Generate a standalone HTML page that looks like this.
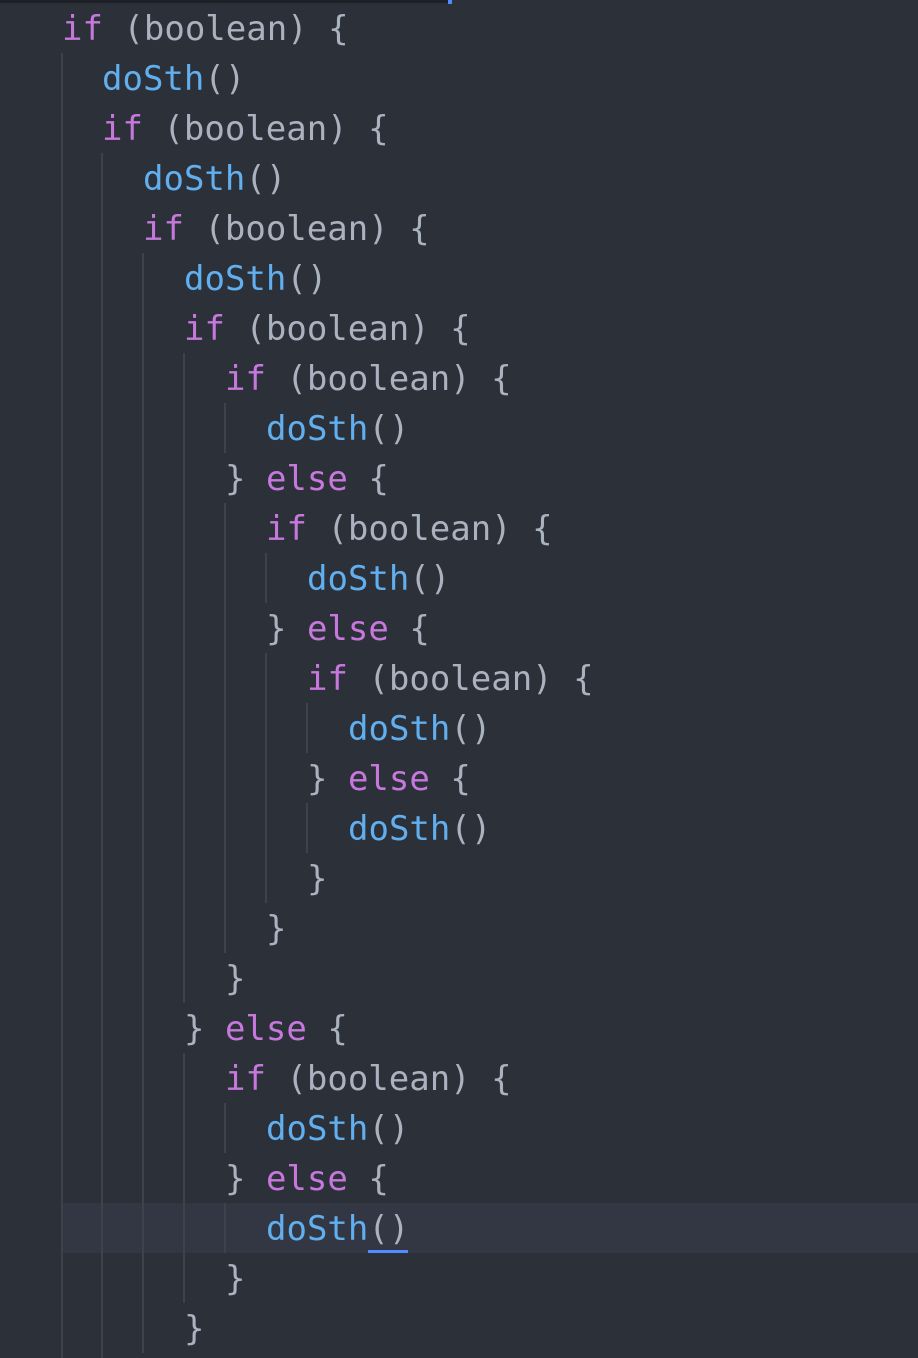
<!DOCTYPE html>
<html><head><meta charset="utf-8"><style>
html,body{margin:0;padding:0;background:#2c3039;width:918px;height:1358px;overflow:hidden;position:relative}
.top{position:absolute;left:0;top:0;width:450px;height:3px;background:#1d2026}
.cur{position:absolute;left:448px;top:0;width:4px;height:4px;background:#528bff}
.hl{position:absolute;left:62px;top:1203px;width:856px;height:50px;background:#323743}
.g{position:absolute;width:2px;background:#3d424b}
.l{position:absolute;height:50px;line-height:50px;font-family:"DejaVu Sans Mono","Liberation Mono",monospace;font-size:34px;color:#abb2bf;white-space:pre;margin-top:1px}
.k{color:#c678dd}.f{color:#61afef}
.u{position:absolute;left:368px;top:1250px;width:40px;height:3px;background:#528bff}
</style></head><body>
<div class="top"></div><div class="cur"></div>
<div class="hl"></div>
<div class="g" style="left:61px;top:53px;height:1305px"></div>
<div class="g" style="left:101px;top:153px;height:1205px"></div>
<div class="g" style="left:142px;top:253px;height:1100px"></div>
<div class="g" style="left:183px;top:353px;height:650px"></div>
<div class="g" style="left:183px;top:1053px;height:250px"></div>
<div class="g" style="left:224px;top:403px;height:50px"></div>
<div class="g" style="left:224px;top:503px;height:450px"></div>
<div class="g" style="left:224px;top:1103px;height:50px"></div>
<div class="g" style="left:224px;top:1203px;height:50px"></div>
<div class="g" style="left:265px;top:553px;height:50px"></div>
<div class="g" style="left:265px;top:653px;height:250px"></div>
<div class="g" style="left:306px;top:703px;height:50px"></div>
<div class="g" style="left:306px;top:803px;height:50px"></div>

<div class="l" style="left:62px;top:3px"><span class="k">if</span> (boolean) {</div>
<div class="l" style="left:102px;top:53px"><span class="f">doSth</span>()</div>
<div class="l" style="left:102px;top:103px"><span class="k">if</span> (boolean) {</div>
<div class="l" style="left:143px;top:153px"><span class="f">doSth</span>()</div>
<div class="l" style="left:143px;top:203px"><span class="k">if</span> (boolean) {</div>
<div class="l" style="left:184px;top:253px"><span class="f">doSth</span>()</div>
<div class="l" style="left:184px;top:303px"><span class="k">if</span> (boolean) {</div>
<div class="l" style="left:225px;top:353px"><span class="k">if</span> (boolean) {</div>
<div class="l" style="left:266px;top:403px"><span class="f">doSth</span>()</div>
<div class="l" style="left:225px;top:453px">} <span class="k">else</span> {</div>
<div class="l" style="left:266px;top:503px"><span class="k">if</span> (boolean) {</div>
<div class="l" style="left:307px;top:553px"><span class="f">doSth</span>()</div>
<div class="l" style="left:266px;top:603px">} <span class="k">else</span> {</div>
<div class="l" style="left:307px;top:653px"><span class="k">if</span> (boolean) {</div>
<div class="l" style="left:348px;top:703px"><span class="f">doSth</span>()</div>
<div class="l" style="left:307px;top:753px">} <span class="k">else</span> {</div>
<div class="l" style="left:348px;top:803px"><span class="f">doSth</span>()</div>
<div class="l" style="left:307px;top:853px">}</div>
<div class="l" style="left:266px;top:903px">}</div>
<div class="l" style="left:225px;top:953px">}</div>
<div class="l" style="left:184px;top:1003px">} <span class="k">else</span> {</div>
<div class="l" style="left:225px;top:1053px"><span class="k">if</span> (boolean) {</div>
<div class="l" style="left:266px;top:1103px"><span class="f">doSth</span>()</div>
<div class="l" style="left:225px;top:1153px">} <span class="k">else</span> {</div>
<div class="l" style="left:266px;top:1203px"><span class="f">doSth</span>()</div>
<div class="l" style="left:225px;top:1253px">}</div>
<div class="l" style="left:184px;top:1303px">}</div>
<div class="u"></div>
</body></html>
